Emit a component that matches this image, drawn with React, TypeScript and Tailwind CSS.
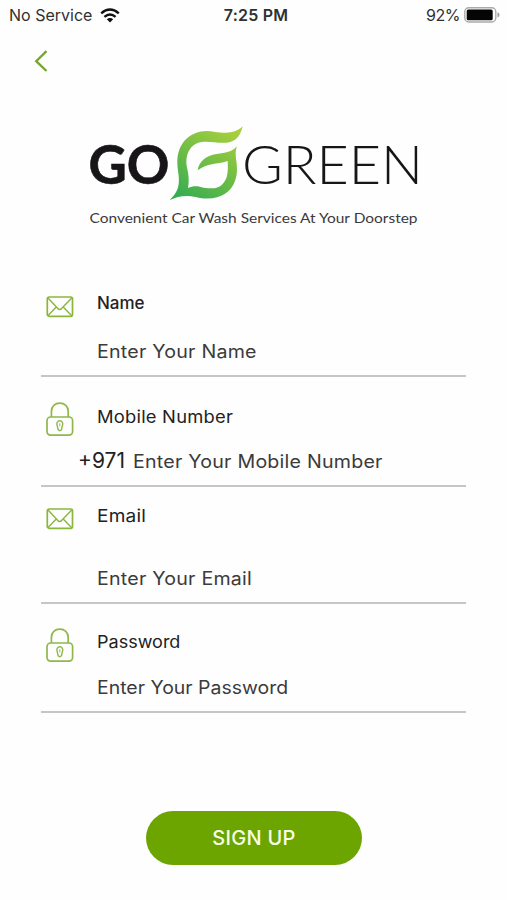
import React from "react";

function Envelope() {
  return (
    <svg width="28" height="22" viewBox="0 0 28 22" fill="none" stroke="#8ab63c" strokeWidth="1.7" strokeLinejoin="round" className="block">
      <rect x="1.3" y="1" width="25.2" height="19.3" rx="1.8" />
      <path d="M1.8 1.7 11.6 12.3Q13.7 14.8 15.8 12.3L26 1.7M1.8 19.8 10.3 11M25.7 19.8 17.2 11" strokeWidth="1.4" />
    </svg>
  );
}

function Lock() {
  return (
    <svg width="28" height="35" viewBox="0 0 28 35" fill="none" stroke="#8fb84b" strokeWidth="1.7" className="block">
      <rect x="1" y="15" width="25.6" height="18.2" rx="3.6" />
      <path d="M5.4 15V9.4C5.4 4.3 9 1.2 13.8 1.2s8.4 3.1 8.4 8.2V15" />
      <path d="M13.8 18.8a3 3.2 0 0 0-2.6 4.8l1 4.2q1.6 1.8 3.2 0l1-4.2A3 3.2 0 0 0 13.8 18.8Z" strokeWidth="1.4" />
      <path d="M13.8 21.3v3" strokeWidth="1" />
    </svg>
  );
}

interface FieldProps {
  icon: React.ReactNode;
  label: React.ReactNode;
  children: React.ReactNode;
  className: string;
}

function Field({ icon, label, children, className }: FieldProps) {
  return (
    <div className={"flex border-b-2 border-[#c6c6c6] pl-[5px] " + className}>
      <div className="w-[51px] shrink-0">{icon}</div>
      <div className="flex flex-col justify-between whitespace-nowrap">
        <div className="text-[17px] leading-[20px] text-[#222]">{label}</div>
        <div className="text-[18px] leading-[22px] text-[#3b3b3b]">{children}</div>
      </div>
    </div>
  );
}

function Placeholder({ children }: { children: React.ReactNode }) {
  return <span className="inline-block origin-left scale-x-[1.09] tracking-[0.2px]">{children}</span>;
}

function Logo() {
  return (
    <svg width="334" height="106" viewBox="87 123 334 106" className="block" fill="#171518">
      <defs>
        <linearGradient id="leaf" x1="0.2" y1="1" x2="0.8" y2="0">
          <stop offset="0" stopColor="#35ad52" />
          <stop offset="0.5" stopColor="#70bd45" />
          <stop offset="1" stopColor="#a9d03d" />
        </linearGradient>
      </defs>
      <text x="88.5" y="184" fontFamily="Lato, sans-serif" fontWeight="700" fontSize="53" textLength="81" lengthAdjust="spacingAndGlyphs" stroke="#171518" strokeWidth=".6">GO</text>
      <path
        transform="translate(160 120) scale(.33333)"
        fill="url(#leaf)"
        d="M248 19C225 41 201 40 162 35C98 24 55 64 52 121C51 150 59 166 56 191C54 213 43 225 29 240C53 229 77 224 107 231C166 246 211 224 225 183C234 160 231 138 228 115C226 99 227 91 231 79C215 96 197 99 170 102C137 106 117 125 113 151C142 128 169 134 203 123C204 147 205 172 191 188C174 211 145 206 119 200C107 197 94 199 84 204C88 185 86 165 82 147C72 104 91 70 126 66C156 63 182 73 211 66C235 59 243 39 248 19Z"
      />
      <text x="242" y="184" fontFamily="Lato, sans-serif" fontWeight="300" fontSize="53" textLength="181" lengthAdjust="spacingAndGlyphs">GREEN</text>
      <text x="89.5" y="222.5" fontFamily="Lato, sans-serif" fontSize="14" fill="#3a3a3a" textLength="328" lengthAdjust="spacingAndGlyphs">Convenient Car Wash Services At Your Doorstep</text>
    </svg>
  );
}

export default function App() {
  return (
    <main className="flex h-[900px] w-[507px] flex-col overflow-hidden bg-[#fefefe] font-['Inter',sans-serif]">
      <header className="flex h-[30px] shrink-0 items-center justify-between pl-[9px] pr-[7px] text-[16px] leading-none text-[#303030]">
        <div className="flex w-[170px] items-center gap-[8px]">
          <span className="whitespace-nowrap">No Service</span>
          <svg width="20" height="15" viewBox="0 0 20 15" fill="none" stroke="#111" strokeWidth="2.4">
            <path d="M1.2 5.4Q10-2.2 18.8 5.4M4.4 8.8Q10 4 15.6 8.8" />
            <path d="M6.8 11.2Q10 8.6 13.2 11.2L10 14.4Z" fill="#111" stroke="none" />
          </svg>
        </div>
        <span className="whitespace-nowrap pl-[3px] font-semibold tracking-[0.2px]">7:25 PM</span>
        <div className="flex w-[170px] items-center justify-end gap-[4px]">
          <span className="tracking-[-0.5px]">92%</span>
          <svg width="36" height="16" viewBox="0 0 36 16">
            <rect x=".8" y=".8" width="31" height="14.2" rx="4" fill="#fff" stroke="#aaa" strokeWidth="1.4" />
            <rect x="2.7" y="2.6" width="26" height="10.6" rx="1.5" fill="#050505" />
            <path d="M33.5 5.2q2 .8 2 2.7t-2 2.7Z" fill="#999" />
          </svg>
        </div>
      </header>

      <button className="ml-[34px] mt-[20px] block h-[22px] w-[15px] shrink-0" aria-label="Back">
        <svg width="15" height="22" viewBox="0 0 15 22" fill="none" stroke="#78a52d" strokeWidth="2.3">
          <path d="M12.5 1.2 2.2 11.2 12.5 21" />
        </svg>
      </button>

      <div className="ml-[87px] mt-[51px] shrink-0">
        <Logo />
      </div>

      <form className="ml-[41px] mt-[64px] flex w-[425px] flex-col">
        <Field className="h-[84px] pb-[12px]" icon={<div className="pt-[3px]"><Envelope /></div>} label={<span className="font-medium">Name</span>}>
          <Placeholder>Enter Your Name</Placeholder>
        </Field>
        <Field className="mt-[25px] h-[85px] pb-[12px]" icon={<Lock />} label={<span className="inline-block origin-left translate-y-[5px] scale-x-[1.08] tracking-[0.2px]">Mobile Number</span>}>
          <div className="-ml-[19px] flex items-baseline gap-[8px]">
            <span className="text-[21px] text-[#222]">+971</span>
            <Placeholder>Enter Your Mobile Number</Placeholder>
          </div>
        </Field>
        <Field className="mt-[19px] h-[98px] pb-[12px]" icon={<div className="pt-[2px]"><Envelope /></div>} label={<span className="inline-block origin-left scale-x-[1.12] tracking-[0.2px]">Email</span>}>
          <Placeholder>Enter Your Email</Placeholder>
        </Field>
        <Field className="mt-[24px] h-[85px] pb-[12px]" icon={<Lock />} label={<span className="inline-block origin-left translate-y-[4px] scale-x-[1.06]">Password</span>}>
          <span className="inline-block origin-left scale-x-[1.08]">Enter Your Password</span>
        </Field>
      </form>

      <button className="ml-[146px] mt-[98px] h-[54px] w-[216px] shrink-0 rounded-full bg-[#6ca500] text-[20px] font-medium tracking-[0.3px] text-[#f7ffe9]">
        SIGN UP
      </button>
    </main>
  );
}
